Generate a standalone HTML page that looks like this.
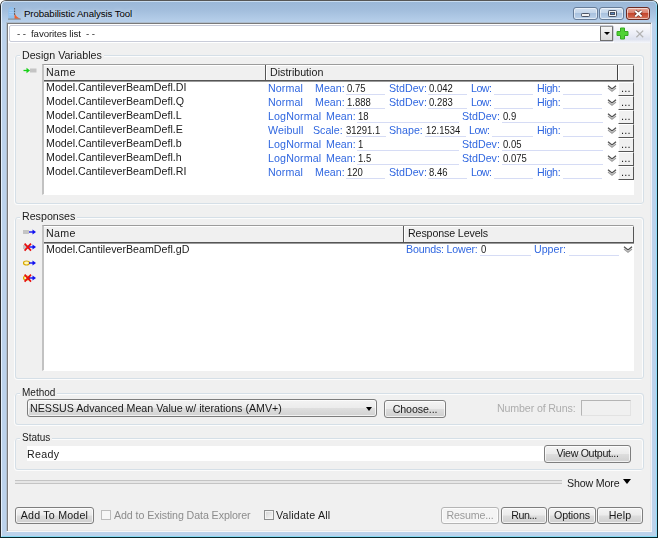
<!DOCTYPE html>
<html><head><meta charset="utf-8"><title>Probabilistic Analysis Tool</title>
<style>
html,body{margin:0;padding:0;background:#fff}
body{width:658px;height:538px;position:relative;overflow:hidden;font-family:"Liberation Sans",sans-serif;font-size:10.67px;color:#1a1a1a;line-height:14px}
.a{position:absolute;box-sizing:border-box}
#win{left:0;top:0;width:658px;height:538px;border:1px solid #2a2c2e;border-top-color:#565656;border-right-color:#0c2024;border-bottom-color:#06282c;border-radius:6px 6px 0 0;background:#bcd3ec}
#tgrad{left:1px;top:1px;width:656px;height:22px;border-radius:5px 5px 0 0;background:linear-gradient(#9bb8d8 0,#a3bedd 40%,#b6cfea 92%,#bad2eb 100%);border-top:1px solid #c8dcf0}
#hl{left:1px;top:1px;width:656px;height:536px;border-left:1px solid #e4f0fd;border-right:1px solid #90dcf8;border-bottom:1px solid #86daf4;border-radius:5px 5px 0 0}
#client{left:6px;top:22px;width:646px;height:510px;background:#f0f0f0;border:1px solid #aebdcd;border-right-color:#eef2fa;border-bottom-color:#f6f7f8;box-shadow:inset 1px 1px 0 #7a7a7a,inset -1px -1px 0 #e7e7e7,inset 2px 2px 0 #f8f8f8}
#title{left:24px;top:7px;font-size:9.7px;letter-spacing:-.1px;line-height:14px;white-space:nowrap;color:#000;text-shadow:0 0 5px rgba(255,255,255,.75)}
.cb{top:7px;height:13px;border:1px solid #667c98;border-radius:3px;background:linear-gradient(#d4e2f1 0,#c3d5ea 45%,#a9c2df 50%,#bcd2ea 100%);box-shadow:inset 0 0 0 1px rgba(255,255,255,.55)}
#cclose{border-color:#6b2a22;background:linear-gradient(#e8a99b 0,#d9806e 45%,#c4452c 50%,#d4745c 100%)}
.t{white-space:nowrap;transform:scaleY(.94);transform-origin:0 7px;will-change:opacity}
.n{transform:none}
.bl{color:#3067e0;transform:scaleY(.97)}
.v{transform:scale(.89,.97);transform-origin:0 7px}
.gb{border:1px solid #d5dfe7;border-radius:3px}
.gw{border:1px solid #fcfcfc;border-radius:3px}
.gl{background:#f0f0f0;padding:0 2px;white-space:nowrap}
.gl span,.btn span,.dots span{display:inline-block;will-change:opacity}
.gl .q{transform:scaleY(.96);transform-origin:0 7px}
.tbl{background:#fff;border:1px solid #9c9c9c;border-left:2px solid #c2c2c2;border-right-color:#fff;border-bottom-color:#fff}
.hd{background:#f0f0f0;border-top:1px solid #fff;border-bottom:1px solid #555;box-shadow:0 1px 0 #9a9a9a}
.btn{border:1px solid #7e7e7e;border-radius:3px;background:linear-gradient(#f4f4f4 0,#ebebeb 48%,#dddddd 52%,#cfcfcf 100%);box-shadow:inset 0 0 0 1px rgba(255,255,255,.7);text-align:center;white-space:nowrap;line-height:15px}
.btn.dis{color:#9a9a9a;border-color:#b5b5b5;background:#f4f4f4}
.ul{border-bottom:1px solid #d6dcf5;height:1px}
.dots{left:618px;width:16px;height:14px;background:#f0f0f0;border-top:1px solid #fff;border-left:1px solid #fff;border-right:1px solid #555;border-bottom:1px solid #555;text-align:center;line-height:11px;font-size:11px;letter-spacing:.2px;color:#222;overflow:hidden}
</style></head><body>
<div id="win" class="a"></div>
<div id="tgrad" class="a"></div>
<div id="hl" class="a"></div>
<svg class="a" style="left:8px;top:6px" width="14" height="14" viewBox="0 0 14 14"><path d="M0.3 12.8 V5.5 C0.3 2.2 1.6 0.8 3.4 0.8 C5.3 0.8 6.5 2.2 6.5 5.5 V12.8 Z" fill="#8ec0ef" fill-opacity=".9"/><path d="M1.5 4.2 H5.4 M1.2 6.5 H5.6 M1.2 8.8 H5.6" stroke="#b4d6f6" stroke-width=".7" fill="none"/><path d="M6.5 6.8 C7.4 9.8 9.4 11.8 12.6 12.8 H6.5 Z" fill="#f0602c"/><path d="M6.6 2 V9" stroke="#4a4a4a" stroke-width=".9" stroke-dasharray="1.6 1" fill="none"/><path d="M0 13.1 H12.8" stroke="#7a7a7a" stroke-width=".9" fill="none"/></svg>
<div id="title" class="a">Probabilistic Analysis Tool</div>
<div class="a cb" style="left:573px;width:25px"><svg class="a" style="left:7px;top:5px" width="10" height="5" viewBox="0 0 10 5"><rect x=".5" y=".5" width="8" height="3" rx=".8" fill="#f2f2f2" stroke="#4a5466" stroke-width="1"/></svg></div>
<div class="a cb" style="left:599px;width:25px"><svg class="a" style="left:8px;top:2px" width="10" height="8" viewBox="0 0 10 8"><rect x=".5" y=".5" width="8" height="6" rx=".8" fill="#f4f4f4" stroke="#4a5466" stroke-width="1"/><rect x="2.5" y="2.5" width="4" height="2" fill="#5a88c0" stroke="#4a5466" stroke-width="1"/></svg></div>
<div id="cclose" class="a cb" style="left:626px;width:24px"><svg class="a" style="left:6px;top:1px" width="11" height="10" viewBox="0 0 11 10"><path d="M2.2 2 L8.6 7.4 M8.6 2 L2.2 7.4" stroke="#5a2a22" stroke-width="3.2"/><path d="M2.2 2 L8.6 7.4 M8.6 2 L2.2 7.4" stroke="#fff" stroke-width="1.9"/></svg></div>
<div id="client" class="a"></div>
<div class="a" style="left:8px;top:24px;width:642px;height:19px;background:linear-gradient(#fdfdfe 0,#eceef6 50%,#dde1ee 80%,#f6f7fb 100%)"></div>
<div class="a" style="left:8px;top:24px;width:606px;height:19px;background:#fff"></div>
<div class="a" style="left:9px;top:25px;width:605px;height:17px;background:#fff;border:1px solid #c9ccd9;border-radius:2px"></div>
<div class="a t" style="left:17px;top:27px;font-size:9.7px;letter-spacing:-.1px">- - &nbsp;favorites list &nbsp;- -</div>
<div class="a" style="left:600px;top:26px;width:13px;height:15px;border:1px solid #6e6e6e;border-top-color:#9a9a9a;background:linear-gradient(#f6f6f6,#dadada)"><div class="a" style="left:3px;top:5px;border-left:3px solid transparent;border-right:3px solid transparent;border-top:3px solid #000"></div></div>
<svg class="a" style="left:616px;top:27px" width="13" height="13" viewBox="0 0 13 13"><path d="M4.5 1 H8.5 V4.5 H12 V8.5 H8.5 V12 H4.5 V8.5 H1 V4.5 H4.5 Z" fill="#50d234" stroke="#36a822" stroke-width="1"/></svg>
<svg class="a" style="left:635px;top:29px" width="10" height="10" viewBox="0 0 10 10"><path d="M1.4 1.6 L8.2 8.2 M8.2 1.6 L1.4 8.2" stroke="#b2b2b2" stroke-width="1.3"/></svg>
<div class="a gw" style="left:14px;top:56px;width:629px;height:149px;"></div>
<div class="a gb" style="left:15px;top:55px;width:629px;height:149px;"></div>
<div class="a gl" style="left:20px;top:48px"><span class="q">Design Variables</span></div>
<svg class="a" style="left:23px;top:67px" width="14" height="7" viewBox="0 0 14 7"><rect x="7" y="1.5" width="6.5" height="4" fill="#c4c4c4"/><path d="M0.5 3.5 H5" stroke="#18d018" stroke-width="1.3"/><path d="M3.5 0.8 L7 3.5 L3.5 6.2 Z" fill="#18d018"/></svg>
<div class="a tbl" style="left:42px;top:64px;width:592px;height:131px;"></div>
<div class="a hd" style="left:44px;top:65px;width:590px;height:16px;border-right:1px solid #666"></div>
<div class="a" style="left:265px;top:65px;width:1px;height:15px;background:#555"></div>
<div class="a" style="left:266px;top:65px;width:1px;height:15px;background:#fff"></div>
<div class="a" style="left:617px;top:65px;width:1px;height:15px;background:#444"></div>
<div class="a" style="left:618px;top:65px;width:1px;height:15px;background:#fff"></div>
<div class="a t" style="left:46px;top:65px;letter-spacing:.35px">Name</div>
<div class="a t" style="left:270px;top:65px;">Distribution</div>
<div class="a t" style="left:46px;top:80px;">Model.CantileverBeamDefl.DI</div>
<div class="a t bl" style="left:268px;top:81px;letter-spacing:.12px">Normal</div>
<div class="a t bl" style="left:315px;top:81px;">Mean:</div>
<div class="a t v" style="left:347px;top:81px;">0.75</div>
<div class="a ul" style="left:346px;top:94px;width:39px;height:1px;"></div>
<div class="a t bl" style="left:389px;top:81px;">StdDev:</div>
<div class="a t v" style="left:429px;top:81px;">0.042</div>
<div class="a ul" style="left:428px;top:94px;width:39px;height:1px;"></div>
<div class="a t bl" style="left:471px;top:81px;letter-spacing:-.5px">Low:</div>
<div class="a ul" style="left:494px;top:94px;width:39px;height:1px;"></div>
<div class="a t bl" style="left:537px;top:81px;letter-spacing:-.3px">High:</div>
<div class="a ul" style="left:563px;top:94px;width:39px;height:1px;"></div>
<svg class="a" style="left:607px;top:85px" width="10" height="8" viewBox="0 0 10 8"><path d="M1 3 L5 6.2 L9 3" stroke="#9a9a9a" stroke-width="1.1" fill="none"/><path d="M1 0.8 L5 4 L9 0.8" stroke="#505050" stroke-width="1.3" fill="none"/></svg>
<div class="a dots" style="top:82px"><span>...</span></div>
<div class="a t" style="left:46px;top:94px;">Model.CantileverBeamDefl.Q</div>
<div class="a t bl" style="left:268px;top:95px;letter-spacing:.12px">Normal</div>
<div class="a t bl" style="left:315px;top:95px;">Mean:</div>
<div class="a t v" style="left:347px;top:95px;">1.888</div>
<div class="a ul" style="left:346px;top:108px;width:39px;height:1px;"></div>
<div class="a t bl" style="left:389px;top:95px;">StdDev:</div>
<div class="a t v" style="left:429px;top:95px;">0.283</div>
<div class="a ul" style="left:428px;top:108px;width:39px;height:1px;"></div>
<div class="a t bl" style="left:471px;top:95px;letter-spacing:-.5px">Low:</div>
<div class="a ul" style="left:494px;top:108px;width:39px;height:1px;"></div>
<div class="a t bl" style="left:537px;top:95px;letter-spacing:-.3px">High:</div>
<div class="a ul" style="left:563px;top:108px;width:39px;height:1px;"></div>
<svg class="a" style="left:607px;top:99px" width="10" height="8" viewBox="0 0 10 8"><path d="M1 3 L5 6.2 L9 3" stroke="#9a9a9a" stroke-width="1.1" fill="none"/><path d="M1 0.8 L5 4 L9 0.8" stroke="#505050" stroke-width="1.3" fill="none"/></svg>
<div class="a dots" style="top:96px"><span>...</span></div>
<div class="a t" style="left:46px;top:108px;">Model.CantileverBeamDefl.L</div>
<div class="a t bl" style="left:268px;top:109px;letter-spacing:.12px">LogNormal</div>
<div class="a t bl" style="left:326px;top:109px;">Mean:</div>
<div class="a t v" style="left:358px;top:109px;">18</div>
<div class="a ul" style="left:357px;top:122px;width:102px;height:1px;"></div>
<div class="a t bl" style="left:462px;top:109px;">StdDev:</div>
<div class="a t v" style="left:503px;top:109px;">0.9</div>
<div class="a ul" style="left:502px;top:122px;width:101px;height:1px;"></div>
<svg class="a" style="left:607px;top:113px" width="10" height="8" viewBox="0 0 10 8"><path d="M1 3 L5 6.2 L9 3" stroke="#9a9a9a" stroke-width="1.1" fill="none"/><path d="M1 0.8 L5 4 L9 0.8" stroke="#505050" stroke-width="1.3" fill="none"/></svg>
<div class="a dots" style="top:110px"><span>...</span></div>
<div class="a t" style="left:46px;top:122px;">Model.CantileverBeamDefl.E</div>
<div class="a t bl" style="left:268px;top:123px;letter-spacing:.12px">Weibull</div>
<div class="a t bl" style="left:313px;top:123px;">Scale:</div>
<div class="a t v" style="left:346px;top:123px;">31291.1</div>
<div class="a ul" style="left:346px;top:136px;width:40px;height:1px;"></div>
<div class="a t bl" style="left:389px;top:123px;">Shape:</div>
<div class="a t v" style="left:426px;top:123px;">12.1534</div>
<div class="a ul" style="left:425px;top:136px;width:41px;height:1px;"></div>
<div class="a t bl" style="left:469px;top:123px;letter-spacing:-.5px">Low:</div>
<div class="a ul" style="left:492px;top:136px;width:41px;height:1px;"></div>
<div class="a t bl" style="left:537px;top:123px;letter-spacing:-.3px">High:</div>
<div class="a ul" style="left:563px;top:136px;width:40px;height:1px;"></div>
<svg class="a" style="left:607px;top:127px" width="10" height="8" viewBox="0 0 10 8"><path d="M1 3 L5 6.2 L9 3" stroke="#9a9a9a" stroke-width="1.1" fill="none"/><path d="M1 0.8 L5 4 L9 0.8" stroke="#505050" stroke-width="1.3" fill="none"/></svg>
<div class="a dots" style="top:124px"><span>...</span></div>
<div class="a t" style="left:46px;top:136px;">Model.CantileverBeamDefl.b</div>
<div class="a t bl" style="left:268px;top:137px;letter-spacing:.12px">LogNormal</div>
<div class="a t bl" style="left:326px;top:137px;">Mean:</div>
<div class="a t v" style="left:358px;top:137px;">1</div>
<div class="a ul" style="left:357px;top:150px;width:102px;height:1px;"></div>
<div class="a t bl" style="left:462px;top:137px;">StdDev:</div>
<div class="a t v" style="left:503px;top:137px;">0.05</div>
<div class="a ul" style="left:502px;top:150px;width:101px;height:1px;"></div>
<svg class="a" style="left:607px;top:141px" width="10" height="8" viewBox="0 0 10 8"><path d="M1 3 L5 6.2 L9 3" stroke="#9a9a9a" stroke-width="1.1" fill="none"/><path d="M1 0.8 L5 4 L9 0.8" stroke="#505050" stroke-width="1.3" fill="none"/></svg>
<div class="a dots" style="top:138px"><span>...</span></div>
<div class="a t" style="left:46px;top:150px;">Model.CantileverBeamDefl.h</div>
<div class="a t bl" style="left:268px;top:151px;letter-spacing:.12px">LogNormal</div>
<div class="a t bl" style="left:326px;top:151px;">Mean:</div>
<div class="a t v" style="left:358px;top:151px;">1.5</div>
<div class="a ul" style="left:357px;top:164px;width:102px;height:1px;"></div>
<div class="a t bl" style="left:462px;top:151px;">StdDev:</div>
<div class="a t v" style="left:503px;top:151px;">0.075</div>
<div class="a ul" style="left:502px;top:164px;width:101px;height:1px;"></div>
<svg class="a" style="left:607px;top:155px" width="10" height="8" viewBox="0 0 10 8"><path d="M1 3 L5 6.2 L9 3" stroke="#9a9a9a" stroke-width="1.1" fill="none"/><path d="M1 0.8 L5 4 L9 0.8" stroke="#505050" stroke-width="1.3" fill="none"/></svg>
<div class="a dots" style="top:152px"><span>...</span></div>
<div class="a t" style="left:46px;top:164px;">Model.CantileverBeamDefl.RI</div>
<div class="a t bl" style="left:268px;top:165px;letter-spacing:.12px">Normal</div>
<div class="a t bl" style="left:315px;top:165px;">Mean:</div>
<div class="a t v" style="left:347px;top:165px;">120</div>
<div class="a ul" style="left:346px;top:178px;width:39px;height:1px;"></div>
<div class="a t bl" style="left:389px;top:165px;">StdDev:</div>
<div class="a t v" style="left:429px;top:165px;">8.46</div>
<div class="a ul" style="left:428px;top:178px;width:39px;height:1px;"></div>
<div class="a t bl" style="left:471px;top:165px;letter-spacing:-.5px">Low:</div>
<div class="a ul" style="left:494px;top:178px;width:39px;height:1px;"></div>
<div class="a t bl" style="left:537px;top:165px;letter-spacing:-.3px">High:</div>
<div class="a ul" style="left:563px;top:178px;width:39px;height:1px;"></div>
<svg class="a" style="left:607px;top:169px" width="10" height="8" viewBox="0 0 10 8"><path d="M1 3 L5 6.2 L9 3" stroke="#9a9a9a" stroke-width="1.1" fill="none"/><path d="M1 0.8 L5 4 L9 0.8" stroke="#505050" stroke-width="1.3" fill="none"/></svg>
<div class="a dots" style="top:166px"><span>...</span></div>
<div class="a gw" style="left:14px;top:218px;width:629px;height:162px;"></div>
<div class="a gb" style="left:15px;top:217px;width:629px;height:162px;"></div>
<div class="a gl" style="left:20px;top:209px"><span class="q">Responses</span></div>
<div class="a tbl" style="left:42px;top:225px;width:592px;height:146px;"></div>
<div class="a hd" style="left:44px;top:226px;width:590px;height:17px;border-right:1px solid #555"></div>
<div class="a" style="left:403px;top:226px;width:1px;height:16px;background:#555"></div>
<div class="a" style="left:404px;top:226px;width:1px;height:16px;background:#fff"></div>
<div class="a t" style="left:46px;top:226px;letter-spacing:.35px">Name</div>
<div class="a t" style="left:408px;top:226px;letter-spacing:-.12px">Response Levels</div>
<div class="a t" style="left:46px;top:242px;">Model.CantileverBeamDefl.gD</div>
<div class="a t bl" style="left:406px;top:242px;letter-spacing:-.18px">Bounds: Lower:</div>
<div class="a t v" style="left:481px;top:242px;">0</div>
<div class="a ul" style="left:480px;top:255px;width:51px;height:1px;"></div>
<div class="a t bl" style="left:534px;top:242px;">Upper:</div>
<div class="a ul" style="left:569px;top:255px;width:50px;height:1px;"></div>
<svg class="a" style="left:623px;top:246px" width="10" height="8" viewBox="0 0 10 8"><path d="M1 3 L5 6.2 L9 3" stroke="#9a9a9a" stroke-width="1.1" fill="none"/><path d="M1 0.8 L5 4 L9 0.8" stroke="#505050" stroke-width="1.3" fill="none"/></svg>
<svg class="a" style="left:23px;top:228px" width="14" height="8" viewBox="0 0 14 8"><rect x="0" y="2" width="6" height="4" fill="#c4c4c4"/><path d="M6 4 H10" stroke="#1010f0" stroke-width="1.4"/><path d="M9.5 1.5 L13 4 L9.5 6.5 Z" fill="#1010f0"/></svg>
<svg class="a" style="left:23px;top:242px" width="14" height="10" viewBox="0 0 14 10"><rect x="0" y="3" width="6" height="4" fill="#c4c4c4"/><path d="M6 5 H10" stroke="#1010f0" stroke-width="1.4"/><path d="M9.5 2.5 L13 5 L9.5 7.5 Z" fill="#1010f0"/><path d="M1.6 1.6 L8 8.6 M8 1.6 L1.6 8.6" stroke="#e81010" stroke-width="1.7"/></svg>
<svg class="a" style="left:23px;top:259px" width="14" height="8" viewBox="0 0 14 8"><ellipse cx="3.5" cy="4" rx="3" ry="2" fill="#fff8c0" stroke="#d8a800" stroke-width="1.2"/><path d="M6 4 H10" stroke="#1010f0" stroke-width="1.4"/><path d="M9.5 1.5 L13 4 L9.5 6.5 Z" fill="#1010f0"/></svg>
<svg class="a" style="left:23px;top:273px" width="14" height="10" viewBox="0 0 14 10"><ellipse cx="3.5" cy="5" rx="3" ry="2" fill="#fff8c0" stroke="#d8a800" stroke-width="1.2"/><path d="M6 5 H10" stroke="#1010f0" stroke-width="1.4"/><path d="M9.5 2.5 L13 5 L9.5 7.5 Z" fill="#1010f0"/><path d="M1.6 1.6 L8 8.6 M8 1.6 L1.6 8.6" stroke="#e81010" stroke-width="1.7"/></svg>
<div class="a gw" style="left:14px;top:394px;width:629px;height:32px;"></div>
<div class="a gb" style="left:15px;top:393px;width:629px;height:32px;"></div>
<div class="a gl" style="left:20px;top:386px;font-size:10px"><span>Method</span></div>
<div class="a" style="left:27px;top:399px;width:350px;height:18px;border:1px solid #7c7c7c;border-radius:3px;background:linear-gradient(#f3f3f3 0,#ececec 48%,#dedede 52%,#d2d2d2 100%);box-shadow:inset 0 0 0 1px rgba(255,255,255,.7)"></div>
<div class="a t n" style="left:30px;top:401px;">NESSUS Advanced Mean Value w/ iterations (AMV+)</div>
<div class="a" style="left:366px;top:407px;border-left:3.5px solid transparent;border-right:3.5px solid transparent;border-top:4px solid #000"></div>
<div class="a btn" style="left:384px;top:400px;width:62px;height:18px;letter-spacing:-0.1px;padding-top:1px"><span>Choose...</span></div>
<div class="a t n" style="left:497px;top:401px;color:#adadad;letter-spacing:-.14px">Number of Runs:</div>
<div class="a" style="left:581px;top:400px;width:50px;height:16px;border:1px solid #b4b4b4;border-right-color:#e2e2e2;border-bottom-color:#e2e2e2;background:#f0f0f0"></div>
<div class="a gw" style="left:14px;top:439px;width:629px;height:32px;"></div>
<div class="a gb" style="left:15px;top:438px;width:629px;height:32px;"></div>
<div class="a gl" style="left:20px;top:431px;font-size:10px"><span>Status</span></div>
<div class="a" style="left:27px;top:446px;width:517px;height:15px;background:#fff"></div>
<div class="a t" style="left:27px;top:447px;letter-spacing:.3px">Ready</div>
<div class="a btn" style="left:544px;top:445px;width:87px;height:18px;letter-spacing:-0.33px;"><span>View Output...</span></div>
<div class="a" style="left:15px;top:480px;width:547px;height:4px;border-top:1px solid #c4c4c4;border-bottom:1px solid #c4c4c4;background:#e6e6e6"></div>
<div class="a t n" style="left:567px;top:476px;letter-spacing:-.15px">Show More</div>
<div class="a" style="left:623px;top:479px;border-left:4.5px solid transparent;border-right:4.5px solid transparent;border-top:5px solid #000"></div>
<div class="a btn" style="left:15px;top:507px;width:79px;height:17px;letter-spacing:0.2px;"><span>Add To Model</span></div>
<div class="a" style="left:101px;top:510px;width:10px;height:10px;border:1px solid #bcbcbc;background:#f6f6f6"></div>
<div class="a t n" style="left:114px;top:508px;color:#8c8c8c;letter-spacing:-.09px">Add to Existing Data Explorer</div>
<div class="a" style="left:264px;top:510px;width:10px;height:10px;border:1px solid #8e8f8f;background:linear-gradient(135deg,#d2d2d2,#fafafa);box-shadow:inset 0 0 0 1px #f4f4f4"></div>
<div class="a t n" style="left:276px;top:508px;letter-spacing:.2px">Validate All</div>
<div class="a btn dis" style="left:441px;top:507px;width:58px;height:17px;letter-spacing:-0.16px;"><span>Resume...</span></div>
<div class="a btn" style="left:501px;top:507px;width:46px;height:17px;letter-spacing:-0.5px;"><span>Run...</span></div>
<div class="a btn" style="left:548px;top:507px;width:48px;height:17px;letter-spacing:-0.13px;"><span>Options</span></div>
<div class="a btn" style="left:597px;top:507px;width:46px;height:17px;letter-spacing:0.2px;"><span>Help</span></div>
</body></html>
